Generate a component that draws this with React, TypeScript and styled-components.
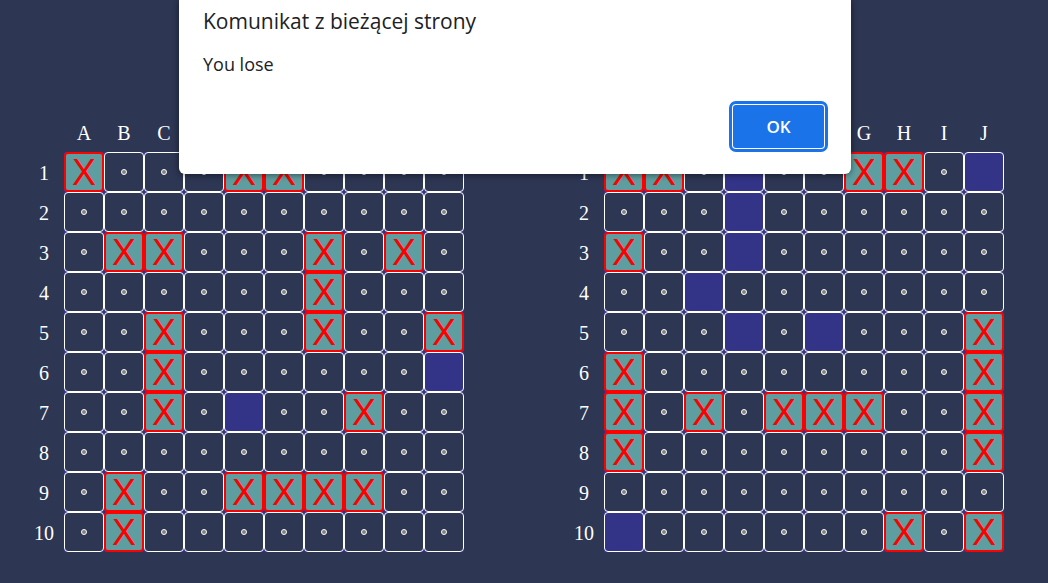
import React from "react";
import styled, { createGlobalStyle, css } from "styled-components";

const GlobalStyle = createGlobalStyle`
  *, *::before, *::after { box-sizing: border-box; }
  body {
    margin: 0;
    background: #2d3652;
    color: #ffffff;
    font-family: "Times New Roman", "Liberation Serif", serif;
    font-size: 20px;
  }
`;

const Page = styled.main`
  display: flex;
  justify-content: center;
  gap: 100px;
  min-height: 100vh;
  padding: 112px 20px 24px 0;
`;

const Board = styled.table`
  height: max-content;
  border-collapse: collapse;
  table-layout: fixed;
`;

const Label = styled.th`
  width: 40px;
  height: 40px;
  padding: 2px 0 0;
  font-weight: 400;
  line-height: 24px;
  text-align: center;
  vertical-align: middle;
`;

const Slot = styled.td`
  width: 40px;
  height: 40px;
  padding: 0;
  background: #333388;
`;

type State = "miss" | "hit" | "ship";

const Field = styled.div<{ $state: State }>`
  display: flex;
  align-items: center;
  justify-content: center;
  width: 40px;
  height: 40px;
  border: 1px solid #ffffff;
  border-radius: 4px;
  background: #2d3652;
  font-family: "Liberation Sans", Arial, sans-serif;
  font-size: 36px;
  line-height: 36px;
  ${({ $state }) =>
    $state === "hit" &&
    css`
      padding-top: 2px;
      border: 2px solid #ff0000;
      background: #5f9ea0;
      color: #ff0000;
    `}
  ${({ $state }) =>
    $state === "ship" &&
    css`
      background: #333388;
    `}
`;

const Dot = styled.span`
  width: 6px;
  height: 6px;
  border: 1px solid #ffffff;
  border-radius: 50%;
  background: #808080;
`;

const Overlay = styled.div`
  position: absolute;
  top: 0;
  left: 0;
  right: 0;
  display: flex;
  justify-content: center;
  padding-right: 18px;
`;

const Dialog = styled.section`
  display: flex;
  flex-direction: column;
  width: 100%;
  max-width: 672px;
  padding: 8px 24px 26px;
  border-radius: 0 0 6px 6px;
  background: #ffffff;
  box-shadow: 0 1px 6px rgba(0, 0, 0, 0.5);
  color: #202124;
  font-family: "Segoe UI", "Open Sans", sans-serif;
`;

const Title = styled.h1`
  margin: 0;
  font-size: 21px;
  font-weight: 400;
  line-height: 26px;
`;

const Message = styled.p`
  margin: 18px 0 29px;
  font-size: 18px;
  line-height: 24px;
`;

const Confirm = styled.button`
  align-self: flex-end;
  width: 91px;
  height: 43px;
  margin-right: 3px;
  padding: 0;
  border: 0;
  border-radius: 3px;
  background: #1a73e8;
  box-shadow: 0 0 0 1px #ffffff, 0 0 0 4px #1a73e8;
  color: #ffffff;
  font-family: "Segoe UI", "Open Sans", sans-serif;
  font-size: 17px;
  font-weight: 600;
`;

const columns = "ABCDEFGHIJ".split("");

// x: hit, s: ship, dot: miss
const playerRows = [
  "x...xx....",
  "..........",
  ".xx...x.x.",
  "......x...",
  "..x...x..x",
  "..x......s",
  "..x.s..x..",
  "..........",
  ".x..xxxx..",
  ".x........",
];

const enemyRows = [
  "xx.s..xx.s",
  "...s......",
  "x..s......",
  "..s.......",
  "...s.s...x",
  "x........x",
  "x.x.xxx..x",
  "x........x",
  "..........",
  "s......x.x",
];

const states: Record<string, State> = { x: "hit", s: "ship", ".": "miss" };

function Sea({ rows, name }: { rows: string[]; name: string }) {
  return (
    <Board aria-label={name}>
      <thead>
        <tr>
          <Label as="td" />
          {columns.map((c) => (
            <Label key={c} scope="col">{c}</Label>
          ))}
        </tr>
      </thead>
      <tbody>
        {rows.map((row, r) => (
          <tr key={r}>
            <Label scope="row">{r + 1}</Label>
            {row.split("").map((mark, c) => (
              <Slot key={c}>
                <Field $state={states[mark]}>
                  {mark === "x" && "X"}
                  {mark === "." && <Dot />}
                </Field>
              </Slot>
            ))}
          </tr>
        ))}
      </tbody>
    </Board>
  );
}

export default function App() {
  return (
    <>
      <GlobalStyle />
      <Page>
        <Sea rows={playerRows} name="Player" />
        <Sea rows={enemyRows} name="Enemy" />
      </Page>
      <Overlay>
        <Dialog role="alertdialog" aria-labelledby="title" aria-describedby="message">
          <Title id="title">Komunikat z bieżącej strony</Title>
          <Message id="message">You lose</Message>
          <Confirm type="button">OK</Confirm>
        </Dialog>
      </Overlay>
    </>
  );
}
